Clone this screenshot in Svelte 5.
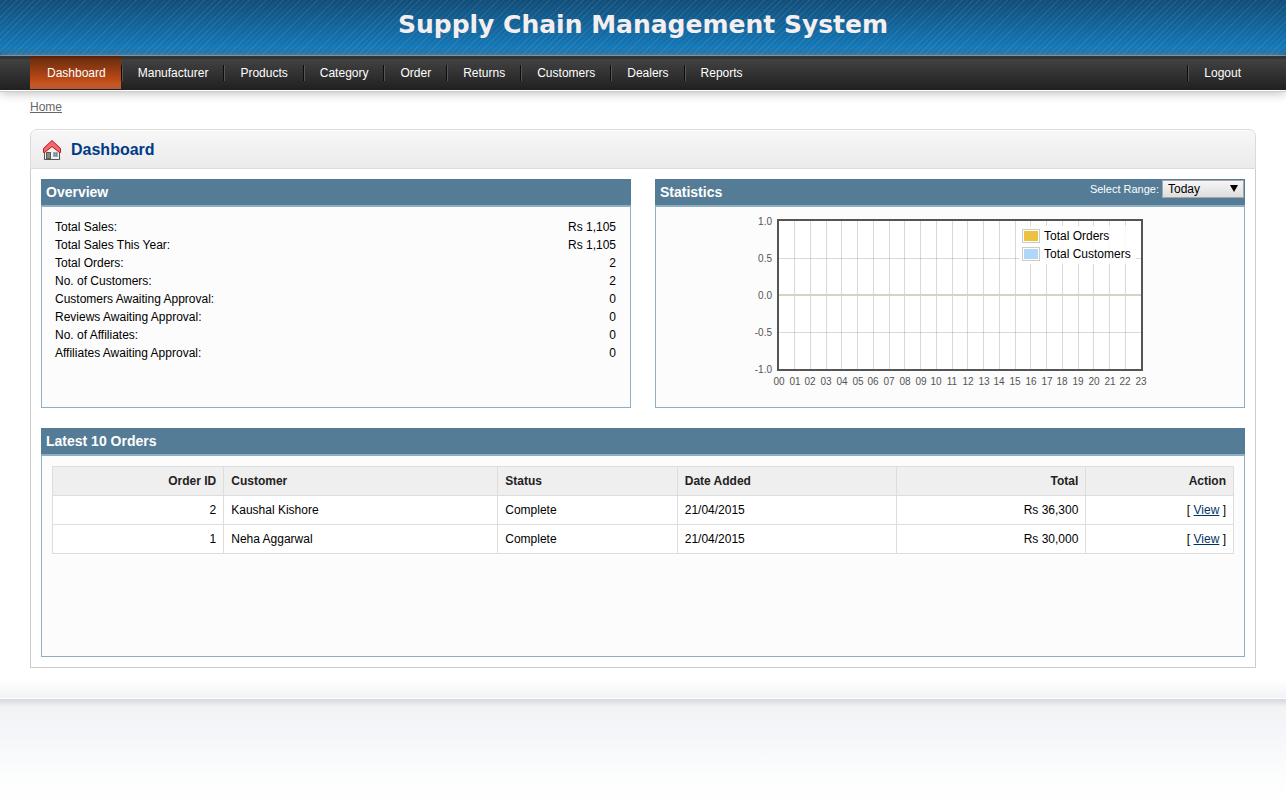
<script lang="ts">
	const menu = [
		'Dashboard',
		'Manufacturer',
		'Products',
		'Category',
		'Order',
		'Returns',
		'Customers',
		'Dealers',
		'Reports'
	];

	const overview = [
		{ label: 'Total Sales:', value: 'Rs 1,105' },
		{ label: 'Total Sales This Year:', value: 'Rs 1,105' },
		{ label: 'Total Orders:', value: '2' },
		{ label: 'No. of Customers:', value: '2' },
		{ label: 'Customers Awaiting Approval:', value: '0' },
		{ label: 'Reviews Awaiting Approval:', value: '0' },
		{ label: 'No. of Affiliates:', value: '0' },
		{ label: 'Affiliates Awaiting Approval:', value: '0' }
	];

	const orders = [
		{ id: 2, customer: 'Kaushal Kishore', status: 'Complete', date: '21/04/2015', total: 'Rs 36,300' },
		{ id: 1, customer: 'Neha Aggarwal', status: 'Complete', date: '21/04/2015', total: 'Rs 30,000' }
	];

	const ranges = ['Today', 'This Week', 'This Month', 'This Year'];
	let range = $state('Today');

	// plot area inside the chart svg
	const plot = { x: 24, y: 4, w: 362, h: 148 };
	const hours = Array.from({ length: 24 }, (_, i) => ({
		label: String(i).padStart(2, '0'),
		x: plot.x + (i * plot.w) / 23
	}));
	const ticks = ['1.0', '0.5', '0.0', '-0.5', '-1.0'].map((label, i) => ({
		label,
		y: plot.y + (i * plot.h) / 4
	}));
</script>

<header>
	<div class="banner">
		<h1>Supply Chain Management System</h1>
	</div>
	<nav>
		<ul>
			{#each menu as item, i}
				<li class:selected={i === 0}><a href="#{item.toLowerCase()}">{item}</a></li>
			{/each}
		</ul>
		<ul>
			<li><a href="#logout">Logout</a></li>
		</ul>
	</nav>
</header>

<main>
	<div class="breadcrumb"><a href="#home">Home</a></div>

	<div class="box">
		<div class="heading">
			<svg width="22" height="22" viewBox="0 0 22 22" aria-hidden="true">
				<ellipse cx="11" cy="21" rx="9" ry="1" fill="#bbb" />
				<path d="M3.500 11 L11 5 L18.500 11 V21.500 H3.500 Z" fill="#f0f0ec" stroke="#555" />
				<rect x="5.500" y="14.500" width="4" height="6" fill="#8b887f" stroke="#5c5c58" />
				<rect x="12.500" y="14.500" width="4" height="4" fill="#4f78b5" stroke="#aaa" />
				<path d="M14.500 15 V18 M13 16.500 H16" stroke="#86a3cf" />
				<path
					d="M11 2.500 L19.500 10.500 V14.500 H18.500 L11 8.500 L3.500 14.500 H2.500 V10.500 Z"
					fill="#f4676b"
					stroke="#b8121b"
					stroke-linejoin="round"
				/>
			</svg>
			<h2>Dashboard</h2>
		</div>

		<div class="content">
			<section>
				<div class="title"><h3>Overview</h3></div>
				<div class="panel">
					<table class="overview">
						<tbody>
							{#each overview as row}
								<tr>
									<th scope="row">{row.label}</th>
									<td>{row.value}</td>
								</tr>
							{/each}
						</tbody>
					</table>
				</div>
			</section>

			<section>
				<div class="title">
					<h3>Statistics</h3>
					<div class="range">
						<label for="range">Select Range:</label>
						<span class="select">
							<select id="range" bind:value={range}>
								{#each ranges as r}
									<option>{r}</option>
								{/each}
							</select>
						</span>
					</div>
				</div>
				<div class="panel">
					<svg class="chart" width="390" height="170" viewBox="0 0 390 170" role="img" aria-label="Statistics">
						<rect x={plot.x} y={plot.y} width={plot.w} height={plot.h} fill="#fff" />
						{#each hours.slice(1, -1) as hour}
							<rect x={Math.floor(hour.x)} y={plot.y} width="1" height={plot.h} class="grid" />
						{/each}
						{#each ticks.slice(1, -1) as tick}
							<rect x={plot.x} y={tick.y} width={plot.w} height="1" class="grid" />
						{/each}
						<rect x={plot.x} y={plot.y + plot.h / 2 - 1} width={plot.w} height="2" fill="#cfd8bc" />
						<rect
							x={plot.x - 1}
							y={plot.y - 1}
							width={plot.w + 2}
							height={plot.h + 2}
							fill="none"
							stroke="#545454"
							stroke-width="2"
						/>
						{#each hours as hour}
							<text x={Math.round(hour.x)} y="168" text-anchor="middle">{hour.label}</text>
						{/each}
						{#each ticks as tick}
							<text x="17" y={tick.y + 4} text-anchor="end">{tick.label}</text>
						{/each}

						<rect x="264" y="9" width="117" height="38" fill="#fff" opacity="0.85" />
						<rect x="267.500" y="12.500" width="17" height="13" fill="#fff" stroke="#ccc" />
						<rect x="269" y="14" width="14" height="10" fill="#edc240" />
						<rect x="267.500" y="30.500" width="17" height="13" fill="#fff" stroke="#ccc" />
						<rect x="269" y="32" width="14" height="10" fill="#afd8f8" />
						<text class="legend" x="289" y="23">Total Orders</text>
						<text class="legend" x="289" y="41">Total Customers</text>
					</svg>
				</div>
			</section>

			<section class="latest">
				<div class="title"><h3>Latest 10 Orders</h3></div>
				<div class="panel">
					<table class="list">
						<thead>
							<tr>
								<th class="right id">Order ID</th>
								<th class="customer">Customer</th>
								<th class="status">Status</th>
								<th class="date">Date Added</th>
								<th class="right total">Total</th>
								<th class="right">Action</th>
							</tr>
						</thead>
						<tbody>
							{#each orders as order}
								<tr>
									<td class="right">{order.id}</td>
									<td>{order.customer}</td>
									<td>{order.status}</td>
									<td>{order.date}</td>
									<td class="right">{order.total}</td>
									<td class="right">[ <a href="#order-{order.id}">View</a> ]</td>
								</tr>
							{/each}
						</tbody>
					</table>
				</div>
			</section>
		</div>
	</div>
</main>

<footer></footer>

<style>
	:global(body) {
		margin: 0;
		background: #fff;
		color: #000;
		font-family: 'Liberation Sans', Arial, sans-serif;
		font-size: 12px;
	}
	h1,
	h2,
	h3,
	ul {
		margin: 0;
		padding: 0;
	}
	.banner {
		height: 55px;
		border-bottom: 1px solid #4f86ab;
		background:
			repeating-linear-gradient(135deg, rgba(255, 255, 255, 0.08) 0 1px, transparent 1px 4px),
			linear-gradient(#114d79, #1478b8 48px, #1373af 50px, #105f92 55px);
		text-align: center;
	}
	h1 {
		color: #f5eeee;
		font-family: 'DejaVu Sans', Verdana, sans-serif;
		font-size: 25px;
		line-height: 50px;
	}
	nav {
		display: flex;
		justify-content: space-between;
		padding: 0 30px;
		background: linear-gradient(#333 3px, #424242 3px, #202020);
		border-bottom: 1px solid #fff;
		box-shadow: 0 1px 0 #ccc, 0 2px 10px #bbb;
	}
	nav ul {
		display: flex;
		list-style: none;
	}
	nav li + li,
	nav ul + ul li {
		background: linear-gradient(90deg, #0c0c0c 1px, #555 1px) no-repeat left center / 2px 16px;
	}
	nav a {
		display: block;
		padding: 0 15px 0 17px;
		color: #fff;
		line-height: 34px;
		text-decoration: none;
	}
	nav .selected {
		background: linear-gradient(#53200c, #74300f 4px, #903a12 12px, #c24c17 25px, #c25a2c 29px, #b05a34 33px, #2a1a1c 33px);
	}
	main {
		padding: 8px 30px 12px;
	}
	.breadcrumb {
		height: 30px;
		line-height: 16px;
	}
	.breadcrumb a {
		color: #666;
	}
	.heading {
		display: flex;
		align-items: center;
		gap: 8px;
		height: 38px;
		padding: 0 10px;
		border: 1px solid #dbdbdb;
		border-radius: 7px 7px 0 0;
		background: linear-gradient(#f7f7f7, #ebebeb);
		box-shadow: inset 0 1px 0 #fff;
	}
	h2 {
		padding-top: 2px;
		color: #003a88;
		font-size: 16px;
		line-height: 20px;
	}
	.content {
		display: grid;
		grid-template-columns: 1fr 1fr;
		gap: 20px 24px;
		padding: 10px;
		border: 1px solid #ccc;
		border-top: none;
	}
	.latest {
		grid-column: 1 / -1;
	}
	.title {
		display: flex;
		justify-content: space-between;
		height: 26px;
		padding-left: 5px;
		background: #547c96;
		color: #fff;
	}
	h3 {
		font-size: 14px;
		line-height: 26px;
	}
	.range {
		display: flex;
		align-items: center;
		gap: 3px;
		height: 18px;
		padding: 1px 1px 0 0;
		font-size: 11px;
	}
	.select {
		position: relative;
	}
	.select::after {
		content: '';
		position: absolute;
		top: 5px;
		right: 6px;
		border: 4px solid transparent;
		border-top: 7px solid #000;
		border-bottom: none;
		pointer-events: none;
	}
	select {
		display: block;
		width: 82px;
		height: 18px;
		padding: 0 5px;
		appearance: none;
		border: 1px solid #a6a6a6;
		border-radius: 0;
		background: linear-gradient(#f6f6f6, #dedede);
		color: #000;
		font: 12px/16px 'Liberation Sans', Arial, sans-serif;
	}
	.panel {
		min-height: 180px;
		padding: 10px;
		border: 1px solid #8eaec3;
		border-top-width: 2px;
		background: #fcfcfc;
	}
	table {
		width: 100%;
		border-collapse: collapse;
	}
	.overview th,
	.overview td {
		padding: 3px 4px 1px 3px;
		line-height: 14px;
		font-weight: normal;
		text-align: left;
	}
	.overview td {
		text-align: right;
	}
	.chart {
		display: block;
		margin: 0 auto;
		overflow: visible;
	}
	.chart text {
		fill: #545454;
		font-size: 10px;
	}
	.chart .legend {
		fill: #000;
		font-size: 12px;
	}
	.grid {
		fill: rgba(84, 84, 84, 0.22);
	}
	.list {
		table-layout: fixed;
		background: #fff;
	}
	.list th,
	.list td {
		box-sizing: border-box;
		height: 29px;
		padding: 0 7px;
		border: 1px solid #ddd;
		text-align: left;
	}
	.list th {
		background: #efefef;
		color: #222;
	}
	.list .right {
		text-align: right;
	}
	.list a {
		color: #003366;
	}
	.list .id {
		width: 14.5%;
	}
	.list .customer {
		width: 23.2%;
	}
	.list .status {
		width: 15.2%;
	}
	.list .date {
		width: 18.6%;
	}
	.list .total {
		width: 16%;
	}
	footer {
		height: 131px;
		background:
			linear-gradient(#fff, #f2f3f6 18px, #fff 18px, #fff 19px, #d3d8dd 19px, #f2f3f5 27px, #f5f6f9 55px, #fcfdfd 95px, #fff 125px);
	}
</style>
